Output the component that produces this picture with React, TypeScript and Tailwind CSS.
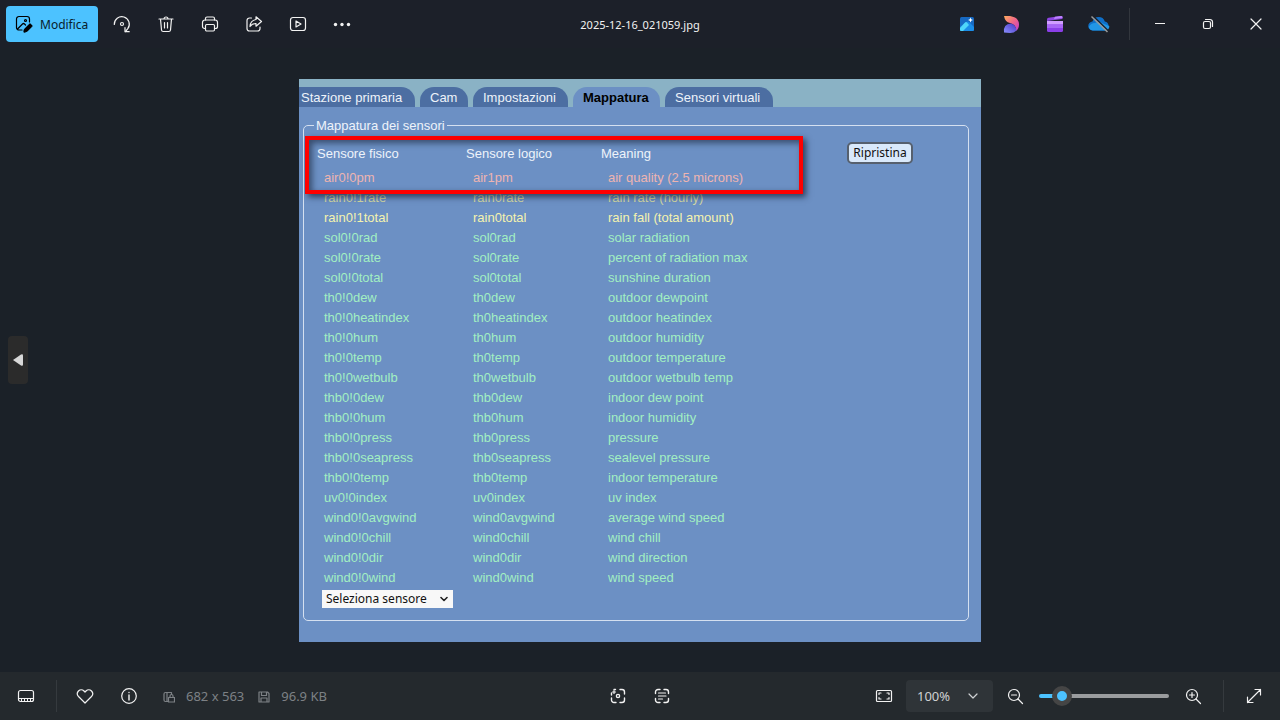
import { useState, type ReactNode } from 'react'
import clsx from 'clsx'

const tabs = [
  { label: 'Stazione primaria', className: 'w-[116px] pl-[2px] rounded-tr-[14px] bg-[#4c6ea2] text-[#eef3fa]' },
  { label: 'Cam', className: 'w-12 pl-[10px] rounded-t-[14px] bg-[#4c6ea2] text-[#eef3fa]' },
  { label: 'Impostazioni', className: 'w-[95px] pl-[10px] rounded-t-[14px] bg-[#4c6ea2] text-[#eef3fa]' },
  { label: 'Mappatura', className: 'w-[87px] pl-[10px] rounded-t-[14px] bg-[#6c90c4] text-black font-bold' },
  { label: 'Sensori virtuali', className: 'w-[108px] pl-[10px] rounded-t-[14px] bg-[#4c6ea2] text-[#eef3fa]' },
]

const sensors = [
  ['air0!0pm', 'air1pm', 'air quality (2.5 microns)'],
  ['rain0!1rate', 'rain0rate', 'rain rate (hourly)'],
  ['rain0!1total', 'rain0total', 'rain fall (total amount)'],
  ['sol0!0rad', 'sol0rad', 'solar radiation'],
  ['sol0!0rate', 'sol0rate', 'percent of radiation max'],
  ['sol0!0total', 'sol0total', 'sunshine duration'],
  ['th0!0dew', 'th0dew', 'outdoor dewpoint'],
  ['th0!0heatindex', 'th0heatindex', 'outdoor heatindex'],
  ['th0!0hum', 'th0hum', 'outdoor humidity'],
  ['th0!0temp', 'th0temp', 'outdoor temperature'],
  ['th0!0wetbulb', 'th0wetbulb', 'outdoor wetbulb temp'],
  ['thb0!0dew', 'thb0dew', 'indoor dew point'],
  ['thb0!0hum', 'thb0hum', 'indoor humidity'],
  ['thb0!0press', 'thb0press', 'pressure'],
  ['thb0!0seapress', 'thb0seapress', 'sealevel pressure'],
  ['thb0!0temp', 'thb0temp', 'indoor temperature'],
  ['uv0!0index', 'uv0index', 'uv index'],
  ['wind0!0avgwind', 'wind0avgwind', 'average wind speed'],
  ['wind0!0chill', 'wind0chill', 'wind chill'],
  ['wind0!0dir', 'wind0dir', 'wind direction'],
  ['wind0!0wind', 'wind0wind', 'wind speed'],
]

function rowColor(id: string) {
  if (id.startsWith('air')) return 'text-[#eeb4b0]'
  if (id === 'rain0!1rate') return 'text-[#d3d9a4]'
  if (id.startsWith('rain')) return 'text-[#f5f3ae]'
  return 'text-[#a2efc2]'
}

interface IconProps {
  children: ReactNode
  size?: number
  className?: string
}

function Icon({ children, size = 18, className }: IconProps) {
  return (
    <svg
      width={size}
      height={size}
      viewBox={`0 0 ${size} ${size}`}
      fill="none"
      stroke="currentColor"
      strokeWidth="1.2"
      strokeLinecap="round"
      strokeLinejoin="round"
      className={clsx('shrink-0', className)}
      aria-hidden="true"
    >
      {children}
    </svg>
  )
}

interface ToolButtonProps {
  label: string
  children: ReactNode
  className?: string
}

function ToolButton({ label, children, className }: ToolButtonProps) {
  return (
    <button
      type="button"
      aria-label={label}
      className={clsx('flex h-9 items-center justify-center rounded hover:bg-white/10', className ?? 'w-11')}
    >
      {children}
    </button>
  )
}

function TopBar() {
  return (
    <header className="grid h-12 grid-cols-[1fr_auto_1fr] items-center bg-[#1c2029]">
      <div className="flex items-center pl-[6px]">
        <button type="button" className="mr-[2px] flex h-9 w-[92px] items-center gap-[7px] rounded bg-[#4cc2ff] pl-[9px] text-[12px] text-[#08202c]">
          <Icon className="text-black">
            <path d="M7 15H4a2.500 2.500 0 0 1-2.500-2.500V4A2.500 2.500 0 0 1 4 1.500h8A2.500 2.500 0 0 1 14.500 4v3" />
            <path d="M2.500 14l5-5q1-1 2 0l1 1" />
            <circle cx="10.500" cy="5.500" r="1" />
            <path d="M10 14l5-5 2 2-5 5q-1.500 1.200-3 1-.2-1.800 1-3z" fill="currentColor" />
          </Icon>
          <span className="pt-[2px]">Modifica</span>
        </button>
        <ToolButton label="Ruota">
          <Icon>
            <path d="M1.300 9.500a7.500 7.500 0 1 1 13.500 4.200l-2.300 2.800" />
            <path d="M12 12.500v4.200h4.200" />
            <circle cx="9" cy="9" r="1.500" />
          </Icon>
        </ToolButton>
        <ToolButton label="Elimina">
          <Icon>
            <path d="M2 4h14M3.500 4l1 11q.2 1.500 1.700 1.500h5.600q1.500 0 1.700-1.500l1-11M7 4a2 2 0 0 1 4 0M7.500 7.500v5.500M10.500 7.500v5.500" />
          </Icon>
        </ToolButton>
        <ToolButton label="Stampa">
          <Icon>
            <path d="M4.500 13.500H3.500a2 2 0 0 1-2-2V7.500a2.500 2.500 0 0 1 2.500-2.500h10a2.500 2.500 0 0 1 2.500 2.500v4a2 2 0 0 1-2 2h-1" />
            <path d="M4.500 5V3.500a1.500 1.500 0 0 1 1.500-1.500h6a1.500 1.500 0 0 1 1.500 1.500V5" />
            <rect x="4.500" y="9.500" width="9" height="6.500" rx="1.200" />
          </Icon>
        </ToolButton>
        <ToolButton label="Condividi">
          <Icon>
            <path d="M6.500 3H4.500A2.500 2.500 0 0 0 2 5.500v8A2.500 2.500 0 0 0 4.500 16h8a2.500 2.500 0 0 0 2.500-2.500V12" />
            <path d="M11 1.800l5.500 4.700-5.500 4.700V8.500q-4 0-6 3 .3-6 6-7z" />
          </Icon>
        </ToolButton>
        <ToolButton label="Presentazione">
          <Icon>
            <rect x="1.500" y="2.500" width="15" height="13" rx="2.500" />
            <path d="M7 6v6l5-3z" />
          </Icon>
        </ToolButton>
        <ToolButton label="Altro">
          <Icon>
            <g fill="currentColor" stroke="none">
              <circle cx="2.500" cy="9.500" r="1.700" />
              <circle cx="9" cy="9.500" r="1.700" />
              <circle cx="15.500" cy="9.500" r="1.700" />
            </g>
          </Icon>
        </ToolButton>
      </div>

      <h1 className="pt-[2px] text-[11px]">2025-12-16_021059.jpg</h1>

      <div className="flex items-center justify-end">
        <ToolButton label="Foto">
          <svg width="16" height="16" viewBox="0 0 16 16" aria-hidden="true">
            <rect x="1" y="1" width="14" height="14" rx="1.500" fill="#1769c2" />
            <path d="M1 11l6-5q1.500-1 3 0l5 5v2.500q0 1.500-1.500 1.500h-11Q1 15 1 13.500z" fill="#1b8de8" />
            <path d="M1 12l5-5.500q1-1 2 0l2 2.500-6 6H2.500Q1 15 1 13.500z" fill="#4fd6fa" />
            <path d="M11.500 1.500l.7 1.800 1.800.7-1.800.7-.7 1.800-.7-1.800L9 4l1.800-.7z" fill="#fff" />
          </svg>
        </ToolButton>
        <ToolButton label="Designer">
          <svg width="18" height="18" viewBox="0 0 18 18" aria-hidden="true">
            <defs>
              <linearGradient id="petalTop" x1="0" y1="0" x2="1" y2="1">
                <stop offset="0" stopColor="#ffae5c" />
                <stop offset=".5" stopColor="#f0648a" />
                <stop offset="1" stopColor="#c03bd0" />
              </linearGradient>
              <linearGradient id="petalBottom" x1="0" y1="1" x2="1" y2="0">
                <stop offset="0" stopColor="#8b90ff" />
                <stop offset="1" stopColor="#4a35c4" />
              </linearGradient>
            </defs>
            <path d="M2 1h6q9 1.500 9 8.500 0 4-3 6.500.5-6.500-6-8Q3 7 2 1z" fill="url(#petalTop)" />
            <path d="M2 17.500q-1-8.500 7-9 5 1.500 5.500 7-2.500 2.500-6.500 2.500z" fill="url(#petalBottom)" />
          </svg>
        </ToolButton>
        <ToolButton label="Clipchamp">
          <svg width="18" height="18" viewBox="0 0 18 18" aria-hidden="true">
            <path d="M1 4.500q0-1.500 1.500-1.800L15 1q1.500-.2 1.500 1.300V4L1 6z" fill="#8d45e2" />
            <path d="M9 1.800l6-.8q1.500-.2 1.500 1.300V3L8 4z" fill="#bd82ff" />
            <rect x="1" y="6" width="16" height="11" rx="1.500" fill="#8b3fe8" />
            <path d="M1 6h16v3.500H1z" fill="#cf9dff" />
            <path d="M1 9.500h16V13H1z" fill="#a766f5" />
          </svg>
        </ToolButton>
        <ToolButton label="OneDrive non connesso">
          <svg width="22" height="18" viewBox="0 0 22 18" aria-hidden="true">
            <path d="M5 15.500a4.500 4.500 0 0 1-.5-9 6.500 6.500 0 0 1 12.300 0 4.600 4.600 0 0 1 .2 9z" fill="#0f6fc8" />
            <path d="M.8 12q2-4 6.200-4 4-2 8 .5l6.300 2.500a4 4 0 0 1-4.300 4.500H5q-3 0-4.200-3.500z" fill="#2196e6" />
            <path d="M4.500 .5l16 15.500" stroke="#1c2029" strokeWidth="1.500" />
            <path d="M3.500 1.500l16 15.500" stroke="#9a9a9a" strokeWidth="1.500" />
          </svg>
        </ToolButton>
        <span className="ml-2 mr-[6px] h-8 w-px bg-[#32363d]" />
        <ToolButton label="Riduci a icona" className="w-12">
          <Icon size={10}><path d="M0 4.500h10" /></Icon>
        </ToolButton>
        <ToolButton label="Ripristina finestra" className="w-12">
          <Icon size={12}>
            <rect x="1.500" y="3.500" width="7" height="7" rx="1.500" />
            <path d="M3.500 1.500H8A2.500 2.500 0 0 1 10.500 4v4.500" />
          </Icon>
        </ToolButton>
        <ToolButton label="Chiudi" className="w-12">
          <Icon size={12}><path d="M1 1l10 10M11 1L1 11" /></Icon>
        </ToolButton>
      </div>
    </header>
  )
}

function SensorPanel() {
  return (
    <section className="w-[682px] max-w-full bg-[#6c90c4] pb-[21px] font-['Liberation_Sans',sans-serif] text-[13px] leading-5">
      <nav className="flex h-7 items-end gap-[5px] bg-[#8ab2c5]">
        {tabs.map((tab) => (
          <a key={tab.label} href="#" className={clsx('h-5 leading-[22px]', tab.className)}>
            {tab.label}
          </a>
        ))}
      </nav>

      <fieldset className="ml-1 mr-3 mt-2 rounded-[5px] border border-[#d5e0f0] pb-3 pl-[10px]">
        <legend className="px-[2px] leading-[22px] text-[#eef3fa]">Mappatura dei sensori</legend>
        <div className="flex items-start justify-between pl-[3px] pr-[55px] pt-[3px]">
          <div className="relative">
            <table className="table-fixed text-left">
              <thead>
                <tr className="h-7 text-[#eef3fa]">
                  <th className="w-[149px] p-0 font-normal">Sensore fisico</th>
                  <th className="w-[135px] p-0 font-normal">Sensore logico</th>
                  <th className="w-[180px] p-0 font-normal">Meaning</th>
                </tr>
              </thead>
              <tbody>
                {sensors.map((row) => (
                  <tr key={row[0]} className={clsx('h-5', rowColor(row[0]))}>
                    {row.map((cell) => (
                      <td key={cell} className="p-0 pl-[7px]">{cell}</td>
                    ))}
                  </tr>
                ))}
              </tbody>
            </table>
            {/* red marker over the new air quality row */}
            <div className="pointer-events-none absolute -left-3 -top-1 h-[58px] w-[498px] border-4 border-[#fe0000] shadow-[3px_3px_6px_rgba(20,30,50,0.7),inset_3px_3px_6px_rgba(20,30,50,0.6)]" />
          </div>
          <button
            type="button"
            className="mt-[2px] h-[22px] w-[66px] rounded-[5px] border-2 border-[#56606e] bg-[#d9e9fb] pt-px font-['Noto_Sans',sans-serif] text-[12px] leading-4 text-[#111]"
          >
            Ripristina
          </button>
        </div>
        <div className="relative ml-2 mt-[2px] h-[18px] w-[131px]">
          <select
            aria-label="Seleziona sensore"
            className="block h-[18px] w-full appearance-none bg-[#f8f8f8] pl-1 pt-px font-['Noto_Sans',sans-serif] text-[12px] leading-4 text-[#111]"
          >
            <option>Seleziona sensore</option>
          </select>
          <Icon size={8} className="pointer-events-none absolute right-[5px] top-[5px] text-[#222]">
            <path d="M1 2.500l3 3 3-3" strokeWidth="1.600" />
          </Icon>
        </div>
      </fieldset>
    </section>
  )
}

function BottomBar() {
  const [zoom, setZoom] = useState(12)

  return (
    <footer className="grid h-12 grid-cols-[1fr_auto_1fr] items-center bg-[#24292d]">
      <div className="flex items-center pl-1">
        <ToolButton label="Sequenza">
          <Icon>
            <rect x="1.500" y="3.500" width="15" height="11" rx="2" />
            <path d="M1.500 11.500h15M4.500 11.500v3M7.500 11.500v3M10.500 11.500v3M13.500 11.500v3" strokeWidth="1" />
          </Icon>
        </ToolButton>
        <span className="ml-2 mr-[6px] h-8 w-px bg-[#353a3e]" />
        <ToolButton label="Preferiti">
          <Icon>
            <path d="M9 16L2.500 9.500a4 4 0 0 1 0-5.500 3.900 3.900 0 0 1 5.500 0l1 1 1-1a3.900 3.900 0 0 1 5.500 0 4 4 0 0 1 0 5.500z" />
          </Icon>
        </ToolButton>
        <ToolButton label="Informazioni">
          <Icon>
            <circle cx="9" cy="9" r="7.300" />
            <path d="M9 8v5M9 5.500v.1" strokeWidth="1.400" />
          </Icon>
        </ToolButton>
        <div className="ml-3 flex items-center pt-[2px] text-[13px] text-[#7d8185]">
          <Icon size={12} className="mr-[11px]">
            <path d="M5 10.500H2.500A1.500 1.500 0 0 1 1 9V3a1.500 1.500 0 0 1 1.500-1.500H8.500v2M4 1.500v9" />
            <path d="M5.500 6.500h6v4.500h-6zM7 6.500V5a1.500 1.500 0 0 1 3 0v1.500" />
          </Icon>
          682 x 563
          <Icon size={12} className="ml-[14px] mr-[11px]">
            <path d="M1 1h8.500L11 2.500V11H1zM3.500 1v3.500h5V1M3 11V7h6v4" />
          </Icon>
          96.9 KB
        </div>
      </div>

      <div className="flex">
        <ToolButton label="Ricerca visiva">
          <Icon size={16}>
            <path d="M1.500 7V5M5.500 1.500H4M10 1.500h2A2.500 2.500 0 0 1 14.500 4v2M14.500 10v2a2.500 2.500 0 0 1-2.500 2.500h-2M6 14.500H4A2.500 2.500 0 0 1 1.500 12v-2" strokeWidth="1.400" />
            <path d="M4 2.500v3M2.500 4h3" strokeWidth="1.200" />
            <circle cx="8" cy="8" r="1.600" strokeWidth="1.400" />
          </Icon>
        </ToolButton>
        <ToolButton label="Scansiona testo">
          <Icon size={16}>
            <path d="M6 1.500H4A2.500 2.500 0 0 0 1.500 4v1.500M10 1.500h2A2.500 2.500 0 0 1 14.500 4v1.500M14.500 10.500V12a2.500 2.500 0 0 1-2.500 2.500h-2M6 14.500H4A2.500 2.500 0 0 1 1.500 12v-1.500" strokeWidth="1.400" />
            <path d="M4.500 5h7M4.500 8h7.500M4.500 11h4" strokeWidth="1.200" />
          </Icon>
        </ToolButton>
      </div>

      <div className="flex items-center justify-end pr-1">
        <ToolButton label="Adatta alla finestra">
          <Icon>
            <rect x="1.500" y="3.500" width="15" height="11" rx="1" />
            <path d="M4 7.500v-1.500h2M12 6h2v1.500M14 10.500V12h-2M6 12H4v-1.500" />
          </Icon>
        </ToolButton>
        <button type="button" className="flex h-8 w-[87px] items-center justify-between rounded bg-[#2f3438] pl-[11px] pr-[15px] text-[13px] text-[#cfd1d3]">
          <span className="pt-[2px]">100%</span>
          <Icon size={10}><path d="M1 3l4 4 4-4" /></Icon>
        </button>
        <ToolButton label="Zoom indietro">
          <Icon>
            <circle cx="8" cy="8" r="5.500" />
            <path d="M12 12l4.500 4.500M5.500 8h5" />
          </Icon>
        </ToolButton>
        <input
          type="range"
          aria-label="Zoom"
          min={0}
          max={100}
          value={zoom}
          onChange={(e) => setZoom(Number(e.target.value))}
          style={{ backgroundImage: `linear-gradient(to right, #4cc2ff ${zoom + 5}%, #9a9c9e ${zoom + 5}%)` }}
          className="mx-[2px] h-1 w-[130px] appearance-none rounded-full [&::-webkit-slider-thumb]:size-5 [&::-webkit-slider-thumb]:appearance-none [&::-webkit-slider-thumb]:rounded-full [&::-webkit-slider-thumb]:border-[5px] [&::-webkit-slider-thumb]:border-[#454545] [&::-webkit-slider-thumb]:bg-[#4cc2ff]"
        />
        <ToolButton label="Zoom avanti">
          <Icon>
            <circle cx="8" cy="8" r="5.500" />
            <path d="M12 12l4.500 4.500M5.500 8h5M8 5.500v5" />
          </Icon>
        </ToolButton>
        <span className="mx-2 h-8 w-px bg-[#353a3e]" />
        <ToolButton label="Schermo intero">
          <Icon size={16}>
            <path d="M1.500 14.500l13-13M9 1.500h5.500V7M1.500 9v5.500H7" />
          </Icon>
        </ToolButton>
      </div>
    </footer>
  )
}

export default function App() {
  return (
    <div className="flex min-h-screen flex-col bg-[#1b2128] font-['Noto_Sans',sans-serif] text-[#f2f2f2]">
      <TopBar />
      <main className="grid flex-1 grid-cols-[1fr_auto_1fr] items-center">
        <button type="button" aria-label="Precedente" className="ml-2 flex h-12 w-5 items-center justify-center rounded bg-[#2b2b2b]">
          <svg width="10" height="12" viewBox="0 0 10 12" fill="#d8d8d8" aria-hidden="true">
            <path d="M0 6l8-5.500q2-1 2 1v9q0 2-2 1z" />
          </svg>
        </button>
        <SensorPanel />
      </main>
      <BottomBar />
    </div>
  )
}
